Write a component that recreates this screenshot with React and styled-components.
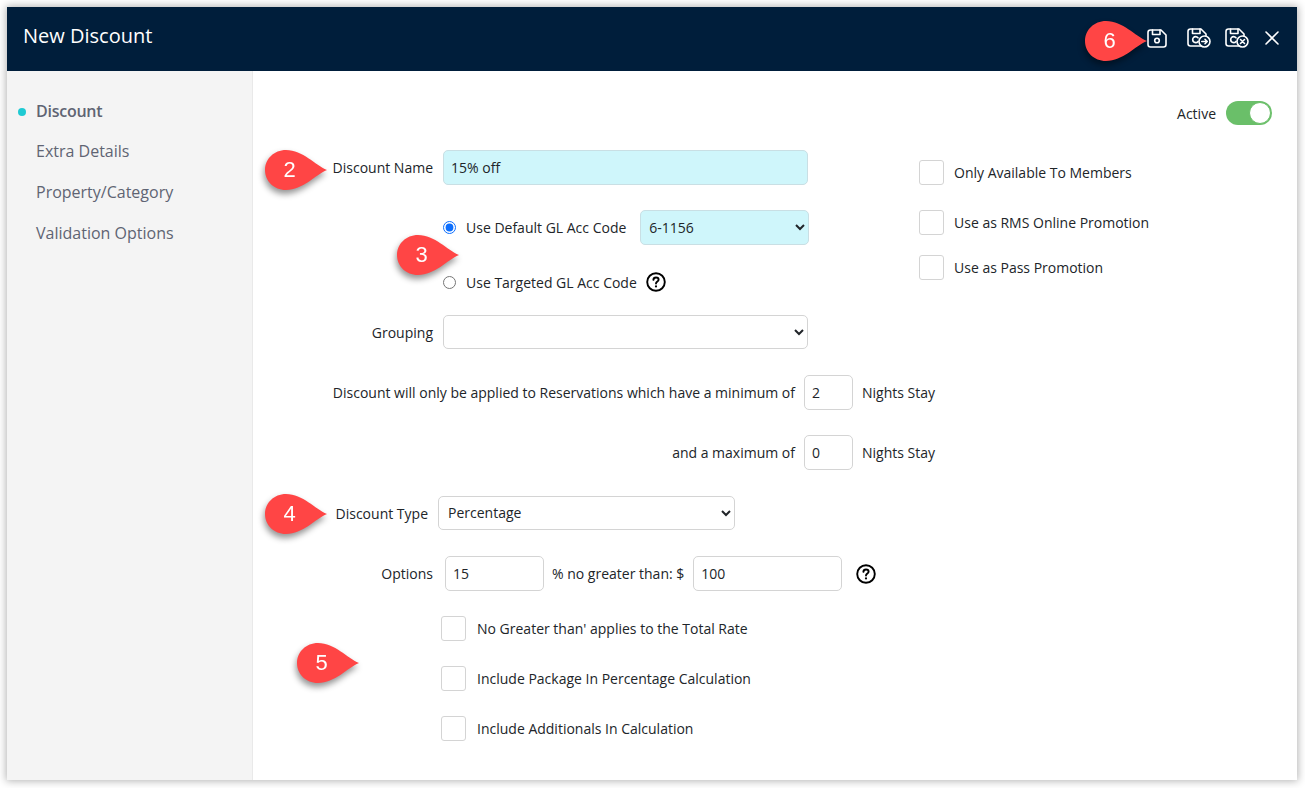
import React from "react";
import styled, { createGlobalStyle } from "styled-components";

const GlobalStyle = createGlobalStyle`
  html, body {
    margin: 0;
    padding: 0;
    background: #ffffff;
    font-family: "Open Sans", "Liberation Sans", sans-serif;
    color: #212529;
  }
`;

const Page = styled.div`
  width: 1305px;
  height: 788px;
  padding: 7px 8px 8px 7px;
  box-sizing: border-box;
  overflow: hidden;
`;

const Window = styled.div`
  position: relative;
  width: 1290px;
  height: 773px;
  display: flex;
  flex-direction: column;
  background: #fff;
  box-shadow: 0 0 8px 1px rgba(0, 0, 0, 0.3);
`;

const Header = styled.header`
  height: 64px;
  flex: none;
  display: flex;
  align-items: center;
  justify-content: space-between;
  padding: 0 18px 0 16px;
  background: #001e3b;
`;

const Title = styled.h1`
  margin: 0 0 8px;
  font-size: 20px;
  font-weight: 400;
  color: #fff;
`;

const Tools = styled.div`
  display: flex;
  align-items: center;
  margin-bottom: 2px;
`;

const ToolIcon = styled.svg`
  display: block;
  margin-left: ${(p) => p.$left || 0}px;
  fill: none;
  stroke: #fff;
  stroke-width: 1.6;
  stroke-linecap: round;
  stroke-linejoin: round;
`;

const Body = styled.div`
  flex: 1;
  display: flex;
  min-height: 0;
`;

const Sidebar = styled.nav`
  width: 246px;
  flex: none;
  box-sizing: border-box;
  padding-top: 20px;
  background: #f4f4f4;
  border-right: 1px solid #e9e9e9;
`;

const NavItem = styled.div`
  position: relative;
  height: ${(p) => (p.$active ? 40 : 41)}px;
  padding-left: 29px;
  line-height: 41px;
  font-size: 16px;
  font-weight: ${(p) => (p.$active ? 600 : 400)};
  letter-spacing: ${(p) => (p.$active ? "-0.25px" : "0")};
  color: #5f6473;

  ${(p) =>
    p.$active &&
    `&::before {
      content: "";
      position: absolute;
      left: 11px;
      top: 17px;
      width: 8px;
      height: 8px;
      border-radius: 50%;
      background: #1fcad3;
    }`}
`;

const Main = styled.main`
  flex: 1;
  min-width: 0;
  padding-top: 30px;
  font-size: 14px;
`;

const ActiveRow = styled.div`
  display: flex;
  justify-content: flex-end;
  align-items: center;
  gap: 10px;
  height: 24px;
  padding-right: 25px;
`;

const Toggle = styled.span`
  position: relative;
  width: 46px;
  height: 24px;
  border-radius: 12px;
  background: #6abf69;

  &::after {
    content: "";
    position: absolute;
    right: 1px;
    top: 1px;
    width: 20px;
    height: 20px;
    border-radius: 50%;
    background: #fff;
    border: 1px solid #6abf69;
  }
`;

const TopSection = styled.div`
  display: flex;
  margin-top: 25px;
`;

const TopFields = styled.div`
  width: 666px;
  flex: none;
`;

const MemberOptions = styled.div`
  display: flex;
  flex-direction: column;
  padding-top: 10px;
`;

const Row = styled.div`
  display: flex;
  align-items: center;
  height: ${(p) => p.$height || 35}px;
  margin-top: ${(p) => p.$top || 0}px;
`;

const Label = styled.label`
  width: ${(p) => p.$width || 180}px;
  flex: none;
  margin-right: ${(p) => p.$gap || 10}px;
  text-align: right;
  white-space: nowrap;
`;

const Text = styled.span`
  margin: 0 9px 0 ${(p) => p.$left || 9}px;
  white-space: nowrap;
`;

const Field = styled.input`
  box-sizing: border-box;
  width: ${(p) => p.$width}px;
  height: 35px;
  flex: none;
  margin: 0;
  padding: 0 7px;
  border: 1px solid ${(p) => (p.$filled ? "#c9dfe4" : "#d4d4d4")};
  border-radius: 5px;
  outline: none;
  background: ${(p) => (p.$filled ? "#cff6fb" : "#fff")};
  font: 14px "Open Sans", "Liberation Sans", sans-serif;
  color: #212529;
`;

const Select = styled.select`
  box-sizing: border-box;
  width: ${(p) => p.$width}px;
  height: ${(p) => p.$height || 34}px;
  flex: none;
  margin: 0 0 0 ${(p) => p.$left || 0}px;
  padding: ${(p) => (p.$filled ? "0 4px" : "0 5px 2px")};
  border: 1px solid ${(p) => (p.$filled ? "#c9dfe4" : "#d4d4d4")};
  border-radius: 5px;
  outline: none;
  background-color: ${(p) => (p.$filled ? "#cff6fb" : "#fff")};
  font: 14px "Open Sans", "Liberation Sans", sans-serif;
  color: #212529;
`;

const RadioRow = styled.div`
  display: flex;
  align-items: center;
  height: ${(p) => p.$height}px;
  margin-top: ${(p) => p.$top || 0}px;
  padding-left: 190px;
`;

const Radio = styled.input.attrs({ type: "radio" })`
  width: 13px;
  height: 13px;
  margin: 0 10px 0 0;
  accent-color: #0d6efd;
`;

const RadioLabel = styled.label`
  margin-right: 9px;
  white-space: nowrap;
`;

const HelpIcon = styled.svg`
  display: block;
  flex: none;
  margin-left: ${(p) => p.$left || 0}px;
  fill: none;
  stroke: #000;
`;

const CheckRow = styled.div`
  display: flex;
  align-items: center;
  gap: ${(p) => p.$gap || 10}px;
  height: 25px;
  margin-top: ${(p) => p.$top || 0}px;
  padding-left: ${(p) => p.$indent || 0}px;
`;

const Box = styled.input.attrs({ type: "checkbox" })`
  appearance: none;
  box-sizing: border-box;
  width: 25px;
  height: 25px;
  margin: 0;
  flex: none;
  border: 1px solid #d4d4d4;
  border-radius: 3px;
  background: #fff;
`;

const Callout = styled.div`
  position: absolute;
  left: ${(p) => p.$x - 7}px;
  top: ${(p) => p.$y - 7}px;
  width: 62px;
  height: 40px;
  filter: drop-shadow(-1px 4px 3px rgba(0, 0, 0, 0.42));

  svg {
    position: absolute;
    inset: 0;
    display: block;
    fill: #ff4545;
  }

  span {
    position: absolute;
    left: 0;
    top: 0;
    width: 49px;
    line-height: 40px;
    text-align: center;
    font: 22px/40px "Liberation Sans", Arial, sans-serif;
    color: #fff;
  }
`;

const Pin = ({ n, x, y }) => (
  <Callout $x={x} $y={y}>
    <svg width="62" height="40" viewBox="0 0 62 40">
      <path d="M62 20C50 15 38 0 21 0C9 0 0 9 0 20C0 31 9 40 21 40C38 40 50 25 62 20Z" />
    </svg>
    <span>{n}</span>
  </Callout>
);

const Help = ({ left }) => (
  <HelpIcon $left={left} width="20" height="20" viewBox="0 0 20 20">
    <circle cx="10" cy="10" r="8.8" strokeWidth="1.9" />
    <path d="M7.4 7.9C7.5 6.3 8.6 5.5 10 5.5C11.5 5.5 12.6 6.4 12.6 7.7C12.6 9.5 10 9.5 10 11.5" strokeWidth="1.9" strokeLinecap="round" />
    <circle cx="10" cy="14.4" r="1.1" fill="#000" stroke="none" />
  </HelpIcon>
);

const DISK = "M3.5 1H14L19 6V15.5C19 16.9 18 18 16.5 18H3.5C2 18 1 16.9 1 15.5V3.5C1 2.1 2 1 3.5 1Z";

const SaveIcon = () => (
  <ToolIcon width="20" height="19" viewBox="0 0 20 19">
    <path d={DISK} />
    <path d="M5.5 1V5.5H13V1" />
    <circle cx="10" cy="11.5" r="2.3" />
  </ToolIcon>
);

const SaveCloseIcon = ({ left, children }) => (
  <ToolIcon $left={left} width="24" height="20" viewBox="0 0 24 20">
    <path d="M14 18H3.5C2 18 1 16.9 1 15.5V3.5C1 2.1 2 1 3.5 1H14L19 6V8" />
    <path d="M5.5 1V5.5H13V1" />
    <path d="M11 9.8C10.4 9 9.6 8.6 8.6 8.6C6.9 8.6 5.7 9.9 5.7 11.6C5.7 13.3 6.9 14.6 8.6 14.6C9.6 14.6 10.4 14.2 11 13.4" />
    <circle cx="17.5" cy="13.5" r="5.5" />
    {children}
  </ToolIcon>
);

const CloseIcon = () => (
  <ToolIcon $left={16} width="14" height="14" viewBox="0 0 14 14">
    <path d="M1 1L13 13M13 1L1 13" />
  </ToolIcon>
);

export default function App() {
  return (
    <Page>
      <GlobalStyle />
      <Window>
        <Header>
          <Title>New Discount</Title>
          <Tools>
            <SaveIcon />
            <SaveCloseIcon left={20}>
              <path d="M14.8 13.5H20M18 11.3L20.2 13.5L18 15.7" />
            </SaveCloseIcon>
            <SaveCloseIcon left={14}>
              <path d="M15.5 11.5L19.5 15.5M19.5 11.5L15.5 15.5" />
            </SaveCloseIcon>
            <CloseIcon />
          </Tools>
        </Header>
        <Body>
          <Sidebar>
            <NavItem $active>Discount</NavItem>
            <NavItem>Extra Details</NavItem>
            <NavItem>Property/Category</NavItem>
            <NavItem>Validation Options</NavItem>
          </Sidebar>
          <Main>
            <ActiveRow>
              <span>Active</span>
              <Toggle />
            </ActiveRow>
            <TopSection>
              <TopFields>
                <Row>
                  <Label>Discount Name</Label>
                  <Field $width={365} $filled defaultValue="15% off" />
                </Row>
                <RadioRow $height={35} $top={25}>
                  <Radio name="gl" defaultChecked />
                  <RadioLabel>Use Default GL Acc Code</RadioLabel>
                  <Select $width={169} $height={35} $left={5} $filled defaultValue="6-1156">
                    <option>6-1156</option>
                  </Select>
                </RadioRow>
                <RadioRow $height={20} $top={27}>
                  <Radio name="gl" />
                  <RadioLabel>Use Targeted GL Acc Code</RadioLabel>
                  <Help />
                </RadioRow>
              </TopFields>
              <MemberOptions>
                <CheckRow>
                  <Box />
                  <span>Only Available To Members</span>
                </CheckRow>
                <CheckRow $top={25}>
                  <Box />
                  <span>Use as RMS Online Promotion</span>
                </CheckRow>
                <CheckRow $top={20}>
                  <Box />
                  <span>Use as Pass Promotion</span>
                </CheckRow>
              </MemberOptions>
            </TopSection>
            <Row $height={34} $top={23}>
              <Label>Grouping</Label>
              <Select $width={365}>
                <option></option>
              </Select>
            </Row>
            <Row $top={26}>
              <Label $width={542} $gap={9}>Discount will only be applied to Reservations which have a minimum of</Label>
              <Field $width={49} defaultValue="2" />
              <Text>Nights Stay</Text>
            </Row>
            <Row $top={25}>
              <Label $width={542} $gap={9}>and a maximum of</Label>
              <Field $width={49} defaultValue="0" />
              <Text>Nights Stay</Text>
            </Row>
            <Row $height={34} $top={26}>
              <Label $width={175}>Discount Type</Label>
              <Select $width={297} defaultValue="Percentage">
                <option>Percentage</option>
              </Select>
            </Row>
            <Row $top={26}>
              <Label $gap={12}>Options</Label>
              <Field $width={99} defaultValue="15" />
              <Text $left={8}>% no greater than: $</Text>
              <Field $width={149} defaultValue="100" />
              <Help left={14} />
            </Row>
            <CheckRow $top={25} $indent={188} $gap={11}>
              <Box />
              <span>No Greater than' applies to the Total Rate</span>
            </CheckRow>
            <CheckRow $top={25} $indent={188} $gap={11}>
              <Box />
              <span>Include Package In Percentage Calculation</span>
            </CheckRow>
            <CheckRow $top={25} $indent={188} $gap={11}>
              <Box />
              <span>Include Additionals In Calculation</span>
            </CheckRow>
          </Main>
        </Body>
        <Pin n="2" x={265} y={150} />
        <Pin n="3" x={397} y={235} />
        <Pin n="4" x={265} y={494} />
        <Pin n="5" x={297} y={643} />
        <Pin n="6" x={1085} y={21} />
      </Window>
    </Page>
  );
}
